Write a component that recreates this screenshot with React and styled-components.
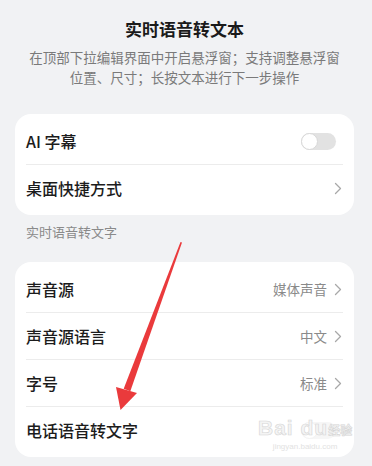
import React from 'react'
import styled, { createGlobalStyle } from 'styled-components'

const GlobalStyle = createGlobalStyle`
    html, body {
        margin: 0;
        padding: 0;
        background: #f1f2f4;
    }
    body {
        font-family: "Noto Sans CJK SC", "Noto Sans", sans-serif;
    }
`

const Page = styled.div`
    position: relative;
    width: 372px;
    height: 466px;
    overflow: hidden;
    background: #f1f2f4;
    padding: 0 18px 0 15px;
    box-sizing: border-box;
`

const Header = styled.div`
    display: flex;
    flex-direction: column;
    align-items: center;
    padding-top: 17px;
`

const Title = styled.div`
    font-size: 17px;
    line-height: 24px;
    font-weight: 700;
    color: #1a1a1a;
`

const Subtitle = styled.div`
    margin-top: 6px;
    font-size: 13.5px;
    line-height: 20px;
    color: #7a7a7a;
    text-align: center;
    width: 320px;
`

const Card = styled.div`
    background: #fff;
    border-radius: 16px;
    padding: 4px 11px;
    margin-top: ${p => p.$top}px;
`

const Row = styled.div`
    display: flex;
    align-items: center;
    justify-content: space-between;
    height: 46px;
    border-top: ${p => (p.$first ? 'none' : '1px solid #ececec')};
`

const Label = styled.div`
    font-size: 16px;
    font-weight: 500;
    color: #1c1c1c;
`

const Right = styled.div`
    display: flex;
    align-items: center;
    gap: 7px;
    margin-right: 1px;
`

const Value = styled.span`
    font-size: 13.5px;
    color: #8a8a8a;
`

const Track = styled.div`
    position: relative;
    width: 35px;
    height: 17px;
    border-radius: 9px;
    background: #e2e2e2;
    margin-right: 6px;
    opacity: ${p => (p.$faded ? 0.3 : 1)};
`

const Knob = styled.div`
    position: absolute;
    left: 0;
    top: 0;
    width: 15px;
    height: 15px;
    border-radius: 50%;
    background: #fff;
    border: 1px solid #d8d8d8;
`

const SectionLabel = styled.div`
    margin-top: 7px;
    padding-left: 11px;
    font-size: 13px;
    line-height: 20px;
    color: #8a8a8a;
`

const Overlay = styled.svg`
    position: absolute;
    left: 0;
    top: 0;
    pointer-events: none;
`

const Watermark = styled.div`
    position: absolute;
    left: 258px;
    top: 416px;
    display: flex;
    flex-direction: column;
    align-items: center;
    color: #e4e4e4;
    font-family: "Liberation Sans", sans-serif;
`

const MarkMain = styled.div`
    display: flex;
    align-items: baseline;
    font-size: 21px;
    font-weight: 700;
    line-height: 24px;
    letter-spacing: 1px;
    -webkit-text-stroke: 0.6px #d6d6d6;
    color: #f4f4f4;

    small {
        font-size: 12px;
        letter-spacing: 0;
        font-family: "Noto Sans CJK SC", sans-serif;
    }
`

const MarkSub = styled.div`
    font-size: 8px;
    line-height: 10px;
    color: #e2e2e2;
`

const Chevron = () => (
    <svg width="8" height="13" viewBox="0 0 8 13">
        <path d="M1.5 1.5 L6.5 6.5 L1.5 11.5" fill="none" stroke="#a8a8a8" strokeWidth="1.3" strokeLinecap="round" strokeLinejoin="round" />
    </svg>
)

const Toggle = ({ faded }) => (
    <Track $faded={faded}>
        <Knob />
    </Track>
)

const Item = ({ label, value, chevron, toggle, first, faded }) => (
    <Row $first={first}>
        <Label>{label}</Label>
        <Right>
            {value && <Value>{value}</Value>}
            {chevron && <Chevron />}
            {toggle && <Toggle faded={faded} />}
        </Right>
    </Row>
)

export default function App() {
    return (
        <Page>
            <GlobalStyle />
            <Header>
                <Title>实时语音转文本</Title>
                <Subtitle>在顶部下拉编辑界面中开启悬浮窗；支持调整悬浮窗位置、尺寸；长按文本进行下一步操作</Subtitle>
            </Header>
            <Card $top={27}>
                <Item first label="AI 字幕" toggle />
                <Item label="桌面快捷方式" chevron />
            </Card>
            <SectionLabel>实时语音转文字</SectionLabel>
            <Card $top={20}>
                <Item first label="声音源" value="媒体声音" chevron />
                <Item label="声音源语言" value="中文" chevron />
                <Item label="字号" value="标准" chevron />
                <Item label="电话语音转文字" toggle faded />
            </Card>
            <Watermark>
                <MarkMain>Bai<span>&nbsp;</span>du<small>经验</small></MarkMain>
                <MarkSub>jingyan.baidu.com</MarkSub>
            </Watermark>
            <Overlay width="372" height="466" viewBox="0 0 372 466">
                <polygon points="180.5,242 182,242.6 130.3,391.2 123.7,388.8" fill="#ea3a3c" />
                <polygon points="116,387 137,393 120.5,410" fill="#ea3a3c" />
            </Overlay>
        </Page>
    )
}
